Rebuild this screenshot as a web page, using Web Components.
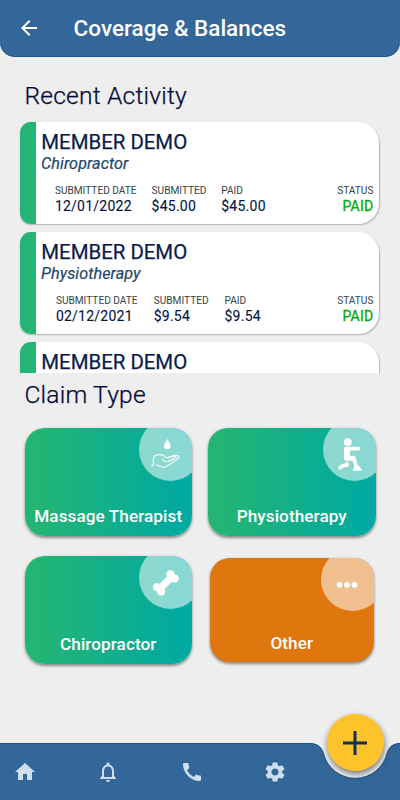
<!DOCTYPE html>
<html lang="en">
<head>
<meta charset="utf-8">
<title>Coverage &amp; Balances</title>
<style>
html,body{margin:0;height:100%}
body{font-family:Roboto,"Liberation Sans",sans-serif;background:#eee;overflow:hidden}
</style>
</head>
<body>
<coverage-app></coverage-app>
<script>
const define=(name,html,setup)=>customElements.define(name,class extends HTMLElement{
  constructor(){
    super();
    const t=document.createElement('template');
    t.innerHTML=html;
    this.attachShadow({mode:'open'}).append(t.content.cloneNode(true));
  }
  connectedCallback(){ if(setup) setup(this,this.shadowRoot); }
});

define('app-header',`<style>
:host{display:flex;box-sizing:border-box;height:57px;padding:16px 0 0 17px;background:#336699;border-radius:0 0 15px 15px;color:#fff;box-shadow:inset 0 -1px 0 #1a5490}
svg{width:24px;height:24px;flex:none}
h1{margin:0 0 0 32.6px;font-weight:500;font-size:22.5px;line-height:24px;white-space:nowrap}
</style>
<svg viewBox="0 0 24 24"><path fill="#fff" d="M20 11H7.83l5.59-5.59L12 4l-8 8 8 8 1.41-1.41L7.83 13H20z"/></svg>
<h1><slot></slot></h1>`);

define('section-title',`<style>
:host{display:block;padding-left:24.4px;height:32px;font-weight:300;font-size:24.6px;line-height:32px;letter-spacing:.2px;color:#05083a;-webkit-text-stroke:.25px #05083a;white-space:nowrap}
</style><slot></slot>`);

define('data-field',`<style>
:host{display:block;white-space:nowrap}
:host([end]){margin-left:auto;text-align:right}
.l{font-size:10.15px;line-height:12px;color:#34454b}
.v{margin-top:1px;font-size:14px;line-height:16px;letter-spacing:.24px;color:#061443;-webkit-text-stroke:.1px currentColor}
:host([end]) .v{color:#06a906;-webkit-text-stroke:.3px currentColor}
</style><div class="l"></div><div class="v"><slot></slot></div>`,
(el,r)=>{r.querySelector('.l').textContent=el.getAttribute('label')});

define('activity-card',`<style>
:host{display:flex;box-sizing:border-box;width:359px;height:102px;flex:none;border-radius:11px 21px 21px 11px;background:linear-gradient(90deg,#24b576 15.7px,#fff 15.7px);padding:8px 6px 0 20px;box-shadow:.3px 1px 1.5px rgba(0,0,0,.25);flex-direction:column}
.n{font-size:20.4px;line-height:25px;color:#0b1c4b;-webkit-text-stroke:.25px #0b1c4b;white-space:nowrap;padding-left:.9px}
.s{font-size:16.2px;line-height:18px;font-style:italic;color:#23476c;-webkit-text-stroke:.2px #23476c;white-space:nowrap;padding-left:.6px;letter-spacing:.07px}
.f{display:flex;gap:var(--gap,14.7px);padding-left:var(--inset,14.5px);margin-top:12.3px}
::slotted(data-field:nth-child(1)){width:82px}
::slotted(data-field:nth-child(2)){width:55px}
</style><div class="n"></div><div class="s"></div><div class="f"><slot></slot></div>`,
(el,r)=>{r.querySelector('.n').textContent=el.getAttribute('name');r.querySelector('.s').textContent=el.getAttribute('service')});

define('activity-list',`<style>
:host{display:flex;flex-direction:column;gap:8px;height:251px;padding:2px 0 0 20.4px;margin-top:8.3px;overflow:hidden}
</style><slot></slot>`);

define('claim-tile',`<style>
:host{display:flex;position:relative;box-sizing:border-box;width:167.5px;height:108px;border-radius:20px;overflow:visible;box-shadow:0 1.5px 3px rgba(0,0,0,.42);align-items:flex-end;justify-content:center;padding-bottom:9px;background:linear-gradient(90deg,#24b572 4%,#00aaa1 94%);color:#fff}
:host([other]){width:164px;height:104px;background:#df760e;padding-bottom:8px}
.clip{position:absolute;inset:0;border-radius:inherit;overflow:hidden}
.c{position:absolute;right:-10px;top:-10px;width:63px;height:63px;border-radius:50%;background:rgba(255,255,255,.54)}
.i{position:absolute;right:0;top:0;width:53px;height:53px}
.t{position:relative;font-size:17.2px;line-height:22px;font-weight:500;letter-spacing:.06px;white-space:nowrap}
</style><div class="clip"><div class="c"></div><div class="i"><slot name="icon"></slot></div></div><div class="t"><slot></slot></div>`);

define('tile-icon',`<style>:host{display:block;width:53px;height:53px}svg{display:block}</style><svg width="53" height="53" viewBox="0 0 53 53"></svg>`,
(el,r)=>{
 const g={
 hand:`<path fill="#fff" d="M28.3 10.8C27.3 13.5 25 15.4 25 18a3.3 3.3 0 0 0 6.6 0C31.6 15.4 29.3 13.5 28.3 10.8Z"/>
 <g fill="none" stroke="#fff" stroke-width="1.15" stroke-linecap="round" stroke-linejoin="round" opacity=".95"><path d="M12.7 37.7h1.6v-6.5c0-2.4 2-3.8 4.2-4.3 2.5-.5 4.4-.3 6.2 1l2.8 2 7.4-2.4c2-.6 3 1.4 1.2 2.4l-6.7 3.3"/><path d="M29.2 29.8l8.3-2.2c2.3-.6 3.4 1.3 1.7 2.7l-3.7 3-10.3 6.2-7.7-2.5"/><path d="M23.6 31.2c.6 2 2.4 2.7 5.6 2l6-2.2"/></g>`,
 squat:`<circle cx="24.8" cy="14.1" r="3.9" fill="#fff"/><path d="M23 18.7H35.3a1.9 1.9 0 0 1 0 3.9H27v5.2h3.6l2 1.3 2.3 9.2-3.3.6-2.2-6.2H23.5c-1.6 0-2.6-1-2.6-2.6V20.8c0-1.3.8-2.1 2.1-2.1Z" fill="#fff"/><path d="M17 39.8 20.8 37.2H24V35.5" fill="none" stroke="#fff" stroke-width="3.6" stroke-linecap="round" stroke-linejoin="round"/><path fill="#fff" d="m32 37.6 3.4-.6 3.2 4.2v1.6H30.5c-.9-.1-1-1.5-.3-2Z"/>`,
 bone:`<g fill="#fff"><path d="M17.6 31 28.6 20l5 5-11 11Z"/><circle cx="18" cy="31.2" r="4"/><circle cx="22.2" cy="35.5" r="4"/><circle cx="31.4" cy="18.3" r="4"/><circle cx="35.7" cy="22.4" r="4"/></g>`,
 dots:`<g fill="#fff"><circle cx="18.5" cy="26.9" r="2.8"/><circle cx="26" cy="26.9" r="2.8"/><circle cx="33.5" cy="26.9" r="2.8"/></g>`};
 r.querySelector('svg').innerHTML=g[el.getAttribute('name')];
});

define('claim-grid',`<style>
:host{display:grid;grid-template-columns:167.5px 167.5px;grid-auto-rows:108px;gap:20.5px 16px;padding:16.7px 0 0 24.5px;align-items:center;justify-items:center}
</style><slot></slot>`);

define('app-nav',`<style>
:host{display:block;position:absolute;left:0;right:0;bottom:0;height:57px}
.bg{position:absolute;left:0;top:0}
nav{position:relative;display:flex;gap:59.6px;padding:17px 0 0 12.5px}
nav svg{width:24px;height:24px;fill:#d0deed;display:block}
.fab{position:absolute;left:326.8px;top:-28.6px;width:57px;height:57px;border-radius:50%;background:#fcc32a;box-shadow:.5px 3px 6px rgba(0,0,0,.5);display:grid;place-items:center}
</style>
<svg class="bg" width="400" height="57" viewBox="0 0 400 57"><path fill="#336699" d="M0 0H308C317 0 321 3 323.2 9.5A32.8 32.8 0 0 0 387.3 9.5C389.5 3 393 .3 400 0V57H0Z"/><path fill="none" stroke="#1a5084" d="M0 .5H308C317 .5 321 3.5 323.2 9.5A32.8 32.8 0 0 0 387.3 9.5C389.5 3.5 393 .8 400 .5"/></svg>
<nav>
<svg viewBox="0 0 24 24"><path d="M10 20v-6h4v6h5v-8h3L12 3 2 12h3v8z"/></svg>
<svg viewBox="0 0 24 24"><path d="M12 22c1.1 0 2-.9 2-2h-4c0 1.1.9 2 2 2zm6-6v-5c0-3.07-1.63-5.64-4.5-6.32V4c0-.83-.67-1.5-1.5-1.5s-1.5.67-1.5 1.5v.68C7.64 5.36 6 7.92 6 11v5l-2 2v1h16v-1l-2-2zm-2 1H8v-6c0-2.48 1.51-4.5 4-4.5s4 2.02 4 4.5v6z"/></svg>
<svg viewBox="0 0 24 24"><path d="M20.01 15.38c-1.23 0-2.42-.2-3.53-.56-.35-.12-.74-.03-1.01.24l-1.57 1.97c-2.83-1.35-5.48-3.9-6.89-6.83l1.95-1.66c.27-.28.35-.67.24-1.02-.37-1.11-.56-2.3-.56-3.53 0-.54-.45-.99-.99-.99H4.19C3.65 3 3 3.24 3 3.99 3 13.28 10.73 21 20.01 21c.71 0 .99-.63.99-1.18v-3.45c0-.54-.45-.99-.99-.99z"/></svg>
<svg viewBox="0 0 24 24"><path d="M19.14 12.94c.04-.3.06-.61.06-.94 0-.32-.02-.64-.07-.94l2.03-1.58c.18-.14.23-.41.12-.61l-1.92-3.32c-.12-.22-.37-.29-.59-.22l-2.39.96c-.5-.38-1.03-.7-1.62-.94l-.36-2.54c-.04-.24-.24-.41-.48-.41h-3.84c-.24 0-.43.17-.47.41l-.36 2.54c-.59.24-1.13.57-1.62.94l-2.39-.96c-.22-.08-.47 0-.59.22L2.74 8.87c-.12.21-.08.47.12.61l2.03 1.58c-.05.3-.09.63-.09.94s.02.64.07.94l-2.03 1.58c-.18.14-.23.41-.12.61l1.92 3.32c.12.22.37.29.59.22l2.39-.96c.5.38 1.03.7 1.62.94l.36 2.54c.05.24.24.41.48.41h3.84c.24 0 .44-.17.47-.41l.36-2.54c.59-.24 1.13-.56 1.62-.94l2.39.96c.22.08.47 0 .59-.22l1.92-3.32c.12-.22.07-.47-.12-.61l-2.01-1.58zM12 15.6c-1.98 0-3.6-1.62-3.6-3.6s1.62-3.6 3.6-3.6 3.6 1.62 3.6 3.6-1.62 3.6-3.6 3.6z"/></svg>
</nav>
<div class="fab"><svg width="24" height="24" viewBox="0 0 24 24"><path d="M12 0V24M0 12H24" stroke="#132f54" stroke-width="3"/></svg></div>`);

define('coverage-app',`<style>
:host{display:flex;flex-direction:column;position:relative;width:400px;height:800px;background:#eee;overflow:hidden}
.recent{margin-top:22.7px}
.claim{margin-top:6px}
</style>
<app-header>Coverage &amp; Balances</app-header>
<section-title class="recent">Recent Activity</section-title>
<activity-list>
<activity-card name="MEMBER DEMO" service="Chiropractor"><data-field label="SUBMITTED DATE">12/01/2022</data-field><data-field label="SUBMITTED">$45.00</data-field><data-field label="PAID">$45.00</data-field><data-field label="STATUS" end>PAID</data-field></activity-card>
<activity-card name="MEMBER DEMO" service="Physiotherapy" style="--gap:15.8px;--inset:15.5px"><data-field label="SUBMITTED DATE">02/12/2021</data-field><data-field label="SUBMITTED">$9.54</data-field><data-field label="PAID">$9.54</data-field><data-field label="STATUS" end>PAID</data-field></activity-card>
<activity-card name="MEMBER DEMO"></activity-card>
</activity-list>
<section-title class="claim">Claim Type</section-title>
<claim-grid>
<claim-tile><tile-icon slot="icon" name="hand"></tile-icon>Massage Therapist</claim-tile>
<claim-tile><tile-icon slot="icon" name="squat"></tile-icon>Physiotherapy</claim-tile>
<claim-tile><tile-icon slot="icon" name="bone"></tile-icon>Chiropractor</claim-tile>
<claim-tile other><tile-icon slot="icon" name="dots"></tile-icon>Other</claim-tile>
</claim-grid>
<app-nav></app-nav>`);
</script>
</body>
</html>
